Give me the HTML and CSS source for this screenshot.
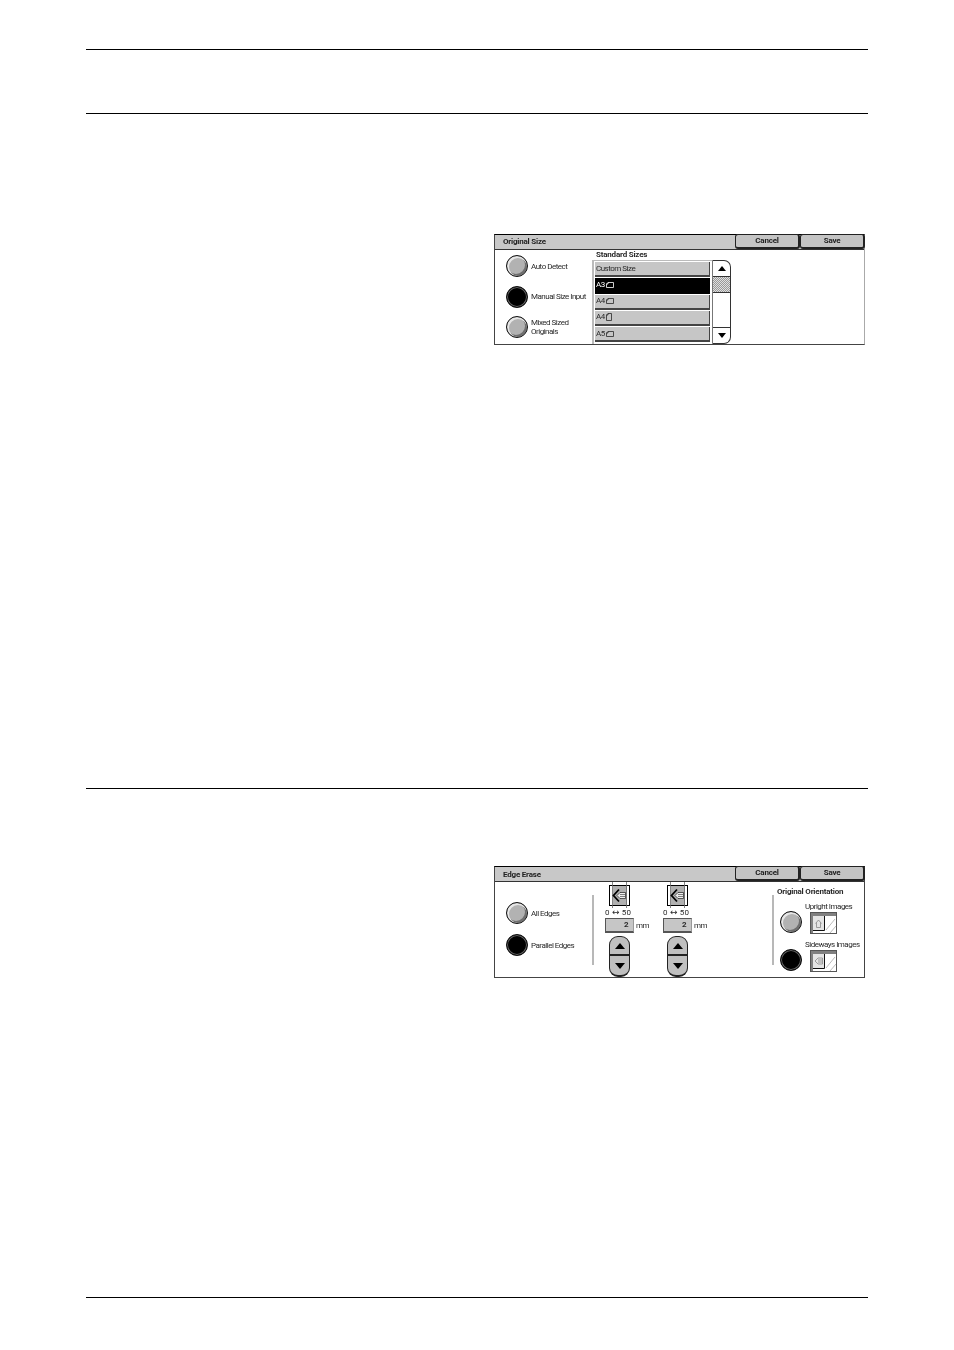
FILE: index.html
```html
<!DOCTYPE html>
<html lang="en">
<head>
<meta charset="utf-8">
<title>Original Size and Edge Erase</title>
<link rel="stylesheet" href="styles.css">
</head>
<body>
<svg class="defs" width="0" height="0" aria-hidden="true">
  <defs>
    <symbol id="land" viewBox="0 0 8 6"><path d="M2 .5H7.5V5.5H.5V2Z M.5 2H2V.5" fill="none" stroke="currentColor" stroke-width=".8"/></symbol>
    <symbol id="port" viewBox="0 0 6 8"><path d="M.5 2L2 .5H5.5V7.5H.5Z M.5 2H2V.5" fill="none" stroke="currentColor" stroke-width=".8"/></symbol>
    <symbol id="erase" viewBox="0 0 21 26">
      <rect x=".5" y="3.5" width="20" height="20" fill="#fff" stroke="#000"/>
      <rect x="4" y="4" width="14" height="19" fill="#b0b0b0"/>
      <path d="M3.5 0V26M17.5 0V26" stroke="#666" stroke-width=".8"/>
      <path d="M10 7.5L4.5 13.5L10 19.5" fill="none" stroke="#000" stroke-width="1.8"/>
      <path d="M8 13.5L11 10.5H16.5V16.5H11Z" fill="#eee" stroke="#000" stroke-width=".6"/>
      <path d="M11 12.5H16M11 14.5H16" stroke="#333" stroke-width=".6"/>
    </symbol>
    <symbol id="up" viewBox="0 0 10 6"><path d="M5 0L10 6H0Z"/></symbol>
    <symbol id="down" viewBox="0 0 10 6"><path d="M0 0H10L5 6Z"/></symbol>
    <symbol id="shade-up" viewBox="0 0 27 22">
      <rect x=".5" y=".5" width="26" height="21" fill="#fff" stroke="#555"/>
      <rect x="1" y="1" width="25" height="3" fill="#808080"/>
      <rect x="1" y="4" width="2" height="17" fill="#808080"/>
      <rect x="3" y="4" width="11" height="14" fill="#e4e4e4"/>
      <path d="M3 18.5H14.5V4" fill="none" stroke="#111"/>
      <path d="M5.5 11.5L8.5 8L11.5 11.5M6.5 10.5V15.5H10.5V10.5" fill="none" stroke="#888" stroke-width=".8"/>
      <path d="M16 18L25 7M20 21L26 14" stroke="#aaa" stroke-width=".8"/>
    </symbol>
    <symbol id="shade-side" viewBox="0 0 27 22">
      <rect x=".5" y=".5" width="26" height="21" fill="#fff" stroke="#555"/>
      <rect x="1" y="1" width="25" height="3" fill="#808080"/>
      <rect x="1" y="4" width="2" height="17" fill="#808080"/>
      <rect x="3" y="4" width="11" height="14" fill="#e4e4e4"/>
      <path d="M3 18.5H14.5V4" fill="none" stroke="#111"/>
      <path d="M5 11L8 8H12.5V14H8Z M8 10H12M8 12H12" fill="none" stroke="#888" stroke-width=".8"/>
      <path d="M16 18L25 7M20 21L26 14" stroke="#aaa" stroke-width=".8"/>
    </symbol>
  </defs>
</svg>

<div class="rule rule-a"></div>
<div class="rule rule-b"></div>

<section class="panel panel-size">
  <header class="panel-head">
    <h2 class="panel-title">Original Size</h2>
    <div class="head-buttons">
      <button class="head-btn">Cancel</button>
      <button class="head-btn">Save</button>
    </div>
  </header>
  <div class="size-body">
    <div class="radio-col">
      <label class="radio-row"><span class="radio"></span><span class="lbl">Auto Detect</span></label>
      <label class="radio-row"><span class="radio on"></span><span class="lbl">Manual Size Input</span></label>
      <label class="radio-row"><span class="radio"></span><span class="lbl">Mixed Sized<br>Originals</span></label>
    </div>
    <div class="list-col">
      <div class="list-title">Standard Sizes</div>
      <div class="list-frame">
        <ul class="size-list">
          <li class="size-item">Custom Size</li>
          <li class="size-item sel">A3<svg class="orient"><use href="#land"/></svg></li>
          <li class="size-item">A4<svg class="orient"><use href="#land"/></svg></li>
          <li class="size-item">A4<svg class="orient tall"><use href="#port"/></svg></li>
          <li class="size-item">A5<svg class="orient"><use href="#land"/></svg></li>
        </ul>
        <div class="scroll">
          <div class="scroll-btn"><svg class="tri"><use href="#up"/></svg></div>
          <div class="scroll-thumb"></div>
          <div class="scroll-track"></div>
          <div class="scroll-btn bottom"><svg class="tri"><use href="#down"/></svg></div>
        </div>
      </div>
    </div>
  </div>
</section>

<div class="rule rule-c"></div>

<section class="panel panel-edge">
  <header class="panel-head">
    <h2 class="panel-title">Edge Erase</h2>
    <div class="head-buttons">
      <button class="head-btn">Cancel</button>
      <button class="head-btn">Save</button>
    </div>
  </header>
  <div class="edge-body">
    <div class="edge-radios">
      <label class="radio-row edge-row"><span class="radio"></span><span class="lbl">All Edges</span></label>
      <label class="radio-row edge-row"><span class="radio on"></span><span class="lbl">Parallel Edges</span></label>
    </div>
    <div class="divider"></div>
    <div class="spin">
      <svg class="erase-icon"><use href="#erase"/></svg>
      <div class="range">0 <span class="arrow">↔</span> 50</div>
      <div class="value-row"><span class="value">2</span><span class="unit">mm</span></div>
      <div class="spin-btn top"><svg class="tri big"><use href="#up"/></svg></div>
      <div class="spin-btn btm"><svg class="tri big"><use href="#down"/></svg></div>
    </div>
    <div class="spin">
      <svg class="erase-icon"><use href="#erase"/></svg>
      <div class="range">0 <span class="arrow">↔</span> 50</div>
      <div class="value-row"><span class="value">2</span><span class="unit">mm</span></div>
      <div class="spin-btn top"><svg class="tri big"><use href="#up"/></svg></div>
      <div class="spin-btn btm"><svg class="tri big"><use href="#down"/></svg></div>
    </div>
    <div class="divider div-right"></div>
    <div class="orient-col">
      <div class="orient-title">Original Orientation</div>
      <div class="orient-row">
        <span class="radio"></span>
        <div class="orient-choice">
          <div class="lbl">Upright Images</div>
          <svg class="shade"><use href="#shade-up"/></svg>
        </div>
      </div>
      <div class="orient-row second">
        <span class="radio on"></span>
        <div class="orient-choice">
          <div class="lbl">Sideways Images</div>
          <svg class="shade"><use href="#shade-side"/></svg>
        </div>
      </div>
    </div>
  </div>
</section>

<div class="rule rule-d"></div>
</body>
</html>
```

FILE: styles.css
```css
* { box-sizing: border-box; }
html, body { margin: 0; padding: 0; background: #fff; }
body {
  width: 954px;
  height: 1350px;
  overflow: hidden;
  padding: 0 86px;
  font-family: Roboto, "Liberation Sans", Arial, sans-serif;
  font-size: 8px;
  letter-spacing: -.5px;
  color: #2a2a2a;
}
.defs { position: absolute; }

.rule { height: 1px; background: #000; width: 782px; }
.rule-a { margin-top: 49px; }
.rule-b { margin-top: 63px; }
.rule-c { margin-top: 443px; }
.rule-d { margin-top: 319px; }

.panel {
  width: 371px;
  margin-left: 408px;
  border: 1px solid #444;
  border-top-color: #000;
  border-right-color: #aaa;
  background: #fff;
  will-change: transform;
}
.panel-size { height: 111px; margin-top: 120px; }
.panel-edge { height: 112px; margin-top: 77px; border-right-color: #444; }

.panel-head {
  height: 15px;
  background: #c8c8c8;
  border-bottom: 1px solid #333;
  display: flex;
  justify-content: space-between;
  align-items: flex-start;
  padding-left: 8px;
}
.panel-title { margin: 0; font-size: 8px; line-height: 14px; font-weight: bold; letter-spacing: -.2px; color: #222; }
.panel-edge .panel-title { line-height: 15px; }
.head-buttons { display: flex; margin: -1px -1px 0 0; }
.head-btn {
  width: 65px;
  height: 15px;
  padding: 0 0 1px;
  margin: 0;
  font: bold 8px/11px Roboto, "Liberation Sans", Arial, sans-serif;
  letter-spacing: -.2px;
  color: #222;
  background: #c4c4c4;
  border: 1px solid #222;
  border-right-width: 2px;
  border-bottom-width: 2px;
  border-radius: 3px;
}

.radio {
  flex: none;
  width: 22px;
  height: 22px;
  border-radius: 50%;
  background: #b2b2b2;
  border: 1px solid #111;
  box-shadow: inset 1px 1px 0 1px #e6e6e6, inset -1px -1px 0 1px #6e6e6e;
}
.radio.on { background: #000; box-shadow: inset 0 0 0 1px #666, inset 0 0 0 2px #000; }
.lbl { line-height: 9px; white-space: nowrap; }

.size-body { display: flex; height: 94px; }
.radio-col { width: 97px; padding: 1px 0 0 11px; flex: none; }
.radio-row { display: flex; align-items: center; gap: 3px; height: 30.5px; }

.list-col { flex: none; display: flex; flex-direction: column; }
.list-title { font-weight: bold; letter-spacing: -.2px; line-height: 9px; padding: 0 0 0 4px; height: 10px; }
.list-frame { display: flex; height: 84px; }
.size-list {
  list-style: none;
  margin: 0;
  padding: 1px 0 0 1px;
  width: 120px;
  border-left: 2px solid #bbb;
  border-top: 1px solid #bbb;
  display: flex;
  flex-direction: column;
  gap: 1px;
}
.size-item {
  flex: none;
  width: 115px;
  height: 15.25px;
  padding-left: 1px;
  line-height: 14px;
  background: #c6c6c6;
  border-bottom: 2px solid #444;
  border-right: 1px solid #444;
  display: flex;
  align-items: center;
}
.size-item.sel { background: #000; color: #fff; border-color: #000; }
.orient { width: 8px; height: 6px; margin-left: 1px; }
.orient.tall { width: 6px; height: 8px; margin-left: 1px; }

.scroll {
  width: 19px;
  height: 84px;
  border: 1px solid #333;
  border-left-color: #777;
  border-radius: 0 7px 7px 0;
  display: flex;
  flex-direction: column;
  overflow: hidden;
}
.scroll-btn { flex: none; height: 16px; display: flex; align-items: center; justify-content: center; color: #000; border-bottom: 1px solid #333; }
.scroll-btn.bottom { border-bottom: 0; border-top: 1px solid #333; }
.tri { width: 8px; height: 5px; fill: #000; }
.tri.big { width: 10px; height: 6px; }
.scroll-thumb {
  flex: none;
  height: 16px;
  border-bottom: 1px solid #333;
  background: repeating-conic-gradient(#999 0 25%, #e0e0e0 0 50%) 0 0 / 2px 2px;
}
.scroll-track { flex: 1; }

.edge-body { display: flex; height: 95px; }
.edge-radios { width: 97px; flex: none; padding: 15px 0 0 11px; }
.edge-row { height: 32px; }
.divider { width: 2px; flex: none; background: #b8b8b8; height: 70px; margin-top: 13px; }
.spin {
  width: 58px;
  flex: none;
  padding: 0 0 0 13px;
  display: flex;
  flex-direction: column;
  align-items: flex-start;
}
.erase-icon { width: 21px; height: 26px; margin-left: 2px; display: block; flex: none; }
.range { line-height: 9px; height: 9px; margin: 0 0 0 -2px; white-space: nowrap; letter-spacing: .2px; }
.arrow { font-family: "DejaVu Sans", sans-serif; font-size: 9px; line-height: 9px; }
.value-row { display: flex; align-items: center; gap: 2px; margin-left: -2px; height: 15px; margin-top: 1px; flex: none; }
.value {
  width: 29px;
  height: 15px;
  background: #c6c6c6;
  border: 1px solid #555;
  border-right-color: #999;
  border-bottom-width: 2px;
  font-size: 8px;
  font-weight: bold;
  line-height: 12px;
  text-align: right;
  padding-right: 5px;
}
.unit { line-height: 12px; }
.spin-btn {
  flex: none;
  width: 21px;
  height: 20px;
  margin-left: 2px;
  background: #c0c0c0;
  border: 1px solid #222;
  display: flex;
  align-items: center;
  justify-content: center;
}
.spin-btn.top { margin-top: 3px; border-radius: 9px 9px 0 0; border-bottom-width: 2px; }
.spin-btn.btm { height: 21px; border-radius: 0 0 9px 9px; border-top-width: 0; border-bottom-width: 2px; }

.div-right { margin-left: 62px; }
.orient-col { padding: 5px 0 0 3px; width: 90px; flex: none; }
.orient-title { font-weight: bold; letter-spacing: -.2px; line-height: 9px; white-space: nowrap; }
.orient-row { display: flex; align-items: center; gap: 3px; margin-top: 7px; height: 29px; }
.orient-row.second { margin-top: 9px; }
.orient-row .radio { margin-top: 8px; margin-left: 3px; }
.orient-choice { display: flex; flex-direction: column; align-items: flex-start; }
.shade { width: 27px; height: 22px; margin-left: 5px; margin-top: 1px; display: block; }
```
